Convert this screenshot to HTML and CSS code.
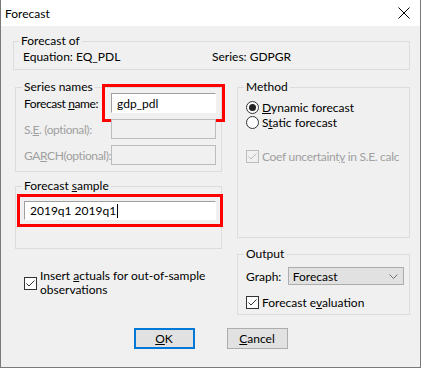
FILE: index.html
```html
<!DOCTYPE html>
<html lang="en">

<head>
  <meta charset="UTF-8">
  <title>Forecast</title>
  <link rel="stylesheet" href="styles.css">
</head>

<body>
  <div class="window">
    <div class="titlebar">
      <span>Forecast</span>
      <svg class="close" width="12" height="12" viewBox="0 0 12 12">
        <path d="M0.5 0.5 L11.5 11.5 M11.5 0.5 L0.5 11.5" stroke="#000" stroke-width="1" fill="none" />
      </svg>
    </div>

    <fieldset class="group forecast-of">
      <legend>Forecast of</legend>
      <div class="info">
        <span class="equation">Equation: EQ_PDL</span>
        <span>Series: GDPGR</span>
      </div>
    </fieldset>

    <div class="columns">
      <div class="col">
        <fieldset class="group series">
          <legend>Series names</legend>
          <div class="name-grid">
            <span>Forecast <u>n</u>ame:</span>
            <div class="field marked"><span>gdp_pdl</span></div>
            <span class="disabled">S.<u>E</u>. (optional):</span>
            <div class="field off"></div>
            <span class="disabled">GA<u>R</u>CH(optional):</span>
            <div class="field off"></div>
          </div>
        </fieldset>

        <fieldset class="group sample">
          <legend>Forecast <u>s</u>ample</legend>
          <div class="field wide marked"><span>2019q1 2019q1</span><span class="caret"></span></div>
        </fieldset>

        <div class="check-row actuals">
          <span class="checkbox">
            <svg width="11" height="11" viewBox="0 0 11 11"><path d="M1.5 5.5 L4 8 L9.5 2.5" stroke="#333" fill="none" /></svg>
          </span>
          <span class="two-lines">Insert <u>a</u>ctuals for out-of-sample<br>observations</span>
        </div>
      </div>

      <div class="col">
        <fieldset class="group method">
          <legend>Method</legend>
          <div class="opt"><span class="radio on"></span><span><u>D</u>ynamic forecast</span></div>
          <div class="opt"><span class="radio"></span><span>S<u>t</u>atic forecast</span></div>
          <div class="opt coef disabled">
            <span class="checkbox off">
              <svg width="11" height="11" viewBox="0 0 11 11"><path d="M1.5 5.5 L4 8 L9.5 2.5" stroke="#bcbcbc" fill="none" /></svg>
            </span>
            <span class="tight">Coef uncertaint<u>y</u> in S.E. calc</span>
          </div>
        </fieldset>

        <fieldset class="group output">
          <legend>Output</legend>
          <div class="graph-row">
            <span class="graph-label">Graph:</span>
            <div class="select">
              <span>Forecast</span>
              <svg width="9" height="5" viewBox="0 0 9 5"><path d="M0.5 0.5 L4.5 4.5 L8.5 0.5" stroke="#707070" fill="none" /></svg>
            </div>
          </div>
          <div class="opt eval">
            <span class="checkbox">
              <svg width="11" height="11" viewBox="0 0 11 11"><path d="M1.5 5.5 L4 8 L9.5 2.5" stroke="#333" fill="none" /></svg>
            </span>
            <span>Forecast e<u>v</u>aluation</span>
          </div>
        </fieldset>
      </div>
    </div>

    <div class="buttons">
      <button class="btn default"><u>O</u>K</button>
      <button class="btn"><u>C</u>ancel</button>
    </div>
  </div>
</body>

</html>
```

FILE: styles.css
```css
body {
  margin: 0;
  font-family: 'Lato', 'Noto Sans', sans-serif;
  font-size: 12px;
  color: #000;
}

.window {
  width: 419px;
  height: 367px;
  border: 1px solid #7a7a7a;
  border-top: none;
  background-color: #f0f0f0;
}

.titlebar {
  height: 26px;
  background-color: #fff;
  display: flex;
  align-items: center;
  justify-content: space-between;
  padding-left: 4px;
}

.titlebar .close {
  margin-right: 10px;
}

.group {
  border: 1px solid #dcdcdc;
  margin: 0;
  min-width: 0;
}

.group legend {
  padding: 0 2px;
  margin-left: -2px;
  line-height: 12px;
}

.forecast-of {
  margin: 9px 10px 0 12px;
  padding: 2px 9px 4px;
}

.forecast-of legend {
  margin-left: -4px;
}

.info {
  display: flex;
  line-height: 16px;
}

.equation {
  width: 189px;
}

.columns {
  display: grid;
  grid-template-columns: 207px 173px;
  column-gap: 15px;
  padding-left: 14px;
  margin-top: 11px;
  align-items: start;
}

.series {
  padding: 0 5px 6px 8px;
}

.name-grid {
  display: grid;
  grid-template-columns: 87px 105px;
  row-gap: 6px;
  align-items: center;
}

.name-grid > span {
  white-space: nowrap;
  letter-spacing: -0.4px;
}

.field {
  height: 20px;
  box-sizing: border-box;
  background-color: #fff;
  border: 1px solid;
  border-color: #a0a0a0 #fff #fff #a0a0a0;
  padding-left: 5px;
  display: flex;
  align-items: center;
}

.field.off {
  background-color: #f0f0f0;
  border-color: #bcbcbc;
}

.field.marked {
  outline: 3px solid #f00;
  outline-offset: 6px;
}

.sample {
  margin-top: 8px;
  padding: 9px 5px 28px 8px;
}

.field.wide {
  width: 192px;
  height: 19px;
}

.sample .field.marked {
  outline-offset: 4px;
}

.caret {
  width: 1px;
  height: 14px;
  background-color: #000;
  margin-left: 1px;
}

.disabled {
  color: #a0a0a0;
}

.check-row {
  display: flex;
  align-items: center;
  gap: 3px;
}

.actuals {
  margin-top: 20px;
  padding-left: 9px;
}

.two-lines {
  line-height: 14px;
}

.checkbox {
  width: 13px;
  height: 13px;
  box-sizing: border-box;
  border: 1px solid #333;
  background-color: #fff;
  display: flex;
  align-items: center;
  justify-content: center;
  flex-shrink: 0;
}

.checkbox.off {
  border-color: #bcbcbc;
  background-color: #f0f0f0;
}

.radio {
  width: 13px;
  height: 13px;
  box-sizing: border-box;
  border: 1px solid #333;
  border-radius: 50%;
  background-color: #fff;
  display: flex;
  align-items: center;
  justify-content: center;
}

.radio.on::after {
  content: '';
  width: 7px;
  height: 7px;
  border-radius: 50%;
  background-color: #222;
}

.method {
  padding: 7px 2px 73px 8px;
}

.opt {
  display: flex;
  align-items: center;
  gap: 3px;
  height: 15px;
  white-space: nowrap;
}

.coef {
  margin-top: 19px;
}

.tight {
  letter-spacing: -0.3px;
}

.output {
  margin-top: 10px;
  padding: 7px 5px 4px 8px;
}

.graph-row {
  display: flex;
  align-items: center;
}

.graph-label {
  width: 42px;
}

.select {
  width: 117px;
  height: 18px;
  box-sizing: border-box;
  background-color: #e1e1e1;
  border: 1px solid #adadad;
  padding: 0 5px 0 4px;
  display: flex;
  align-items: center;
  justify-content: space-between;
}

.eval {
  margin-top: 10px;
}

.buttons {
  display: flex;
  justify-content: center;
  gap: 32px;
  margin-top: 13px;
}

.btn {
  width: 61px;
  height: 21px;
  box-sizing: border-box;
  background-color: #e1e1e1;
  border: 1px solid #adadad;
  font-family: inherit;
  font-size: 12px;
  padding: 0;
  color: #000;
}

.btn.default {
  border: 2px solid #0078d7;
}
```
